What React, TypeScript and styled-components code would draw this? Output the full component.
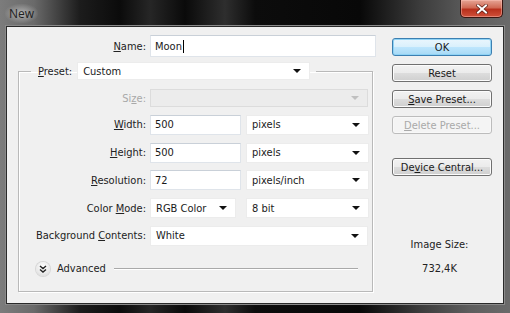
import styled, { createGlobalStyle } from "styled-components";

const GlobalStyle = createGlobalStyle`
  html, body {
    margin: 0;
    padding: 0;
    background: #000;
  }
  body {
    width: 510px;
    height: 313px;
    overflow: hidden;
  }
`;

const uiFont = `"DejaVu Sans Condensed", "DejaVu Sans", sans-serif`;

const Window = styled.div`
  width: 510px;
  height: 313px;
  box-sizing: border-box;
  display: flex;
  flex-direction: column;
  padding: 0 7px 10px;
  background: linear-gradient(
    90deg,
    #7c7c7c 0,
    #6a6a6a 34px,
    #1c1c1c 80px,
    #0b0b0b 120px,
    #262626 150px,
    #0a0a0a 185px,
    #2e2e2e 225px,
    #0c0c0c 255px,
    #080808 360px,
    #3c3c3c 420px,
    #5e5e5e 470px,
    #6a6a6a 510px
  );
  font-family: ${uiFont};
  font-size: 11px;
  color: #222;
`;

const TitleBar = styled.div`
  height: 27px;
  display: flex;
  align-items: flex-start;
  justify-content: space-between;
`;

const Title = styled.span`
  margin-top: 4px;
  margin-left: -2px;
  padding: 1px 4px;
  border-radius: 8px;
  background: radial-gradient(ellipse at center, rgba(190, 190, 190, 0.85) 0, rgba(150, 150, 150, 0) 75%);
  font-family: "Open Sans", "Noto Sans", sans-serif;
  font-size: 12px;
  color: #1e1e1e;
`;

const CloseButton = styled.div`
  width: 43px;
  height: 18px;
  box-sizing: border-box;
  display: flex;
  align-items: center;
  justify-content: center;
  border: 1px solid #3a1510;
  border-top: none;
  border-radius: 0 0 5px 5px;
  background: linear-gradient(180deg, #e6a595 0, #d06a55 45%, #b8301c 55%, #d0503a 100%);
  box-shadow: inset 0 0 0 1px rgba(255, 200, 190, 0.45);
`;

const Body = styled.div`
  flex: 1;
  display: flex;
  background: #f0f0f0;
  box-shadow: 0 0 0 1px #2a2a2a, 0 0 0 2px #8a8a8a;
  padding: 8px 0 0 11px;
`;

const LeftCol = styled.div`
  width: 358px;
  display: flex;
  flex-direction: column;
`;

const RightCol = styled.div`
  width: 100px;
  margin-left: 16px;
  display: flex;
  flex-direction: column;
  padding-top: 3px;
`;

const Row = styled.div<{ $label: number; $h?: number }>`
  display: grid;
  grid-template-columns: ${(p) => p.$label}px auto;
  column-gap: 4px;
  align-items: center;
  height: ${(p) => p.$h ?? 20}px;
`;

const Label = styled.label<{ $disabled?: boolean }>`
  text-align: right;
  white-space: nowrap;
  color: ${(p) => (p.$disabled ? "#a8a8a8" : "#222")};
`;

const Fields = styled.div`
  display: flex;
  gap: 5px;
  height: 100%;
`;

const TextInput = styled.div<{ $w: number; $h?: number }>`
  width: ${(p) => p.$w}px;
  height: ${(p) => p.$h ?? 20}px;
  box-sizing: border-box;
  background: #fff;
  border: 1px solid #dfe4ea;
  border-top-color: #c9d0d8;
  display: flex;
  align-items: center;
  padding-left: 4px;
  color: #1a1a1a;
`;

const Caret = styled.span`
  display: inline-block;
  width: 1px;
  height: 13px;
  background: #000;
  margin-left: 1px;
`;

const Select = styled.div<{ $w: number; $disabled?: boolean; $h?: number }>`
  width: ${(p) => p.$w}px;
  height: ${(p) => p.$h ?? 20}px;
  box-sizing: border-box;
  background: ${(p) => (p.$disabled ? "#ececec" : "#fff")};
  border: 1px solid ${(p) => (p.$disabled ? "#dcdcdc" : "#ececec")};
  display: flex;
  align-items: center;
  justify-content: space-between;
  padding: 0 8px 0 5px;
  color: #1a1a1a;
`;

const Arrow = styled.span<{ $disabled?: boolean }>`
  width: 0;
  height: 0;
  border-left: 4px solid transparent;
  border-right: 4px solid transparent;
  border-top: 4px solid ${(p) => (p.$disabled ? "#c0c0c0" : "#111")};
`;

const Group = styled.fieldset`
  margin: 5px 0 0;
  padding: 0;
  width: 355px;
  box-sizing: border-box;
  border: 1px solid #b9b9b9;
  box-shadow: inset 1px 1px 0 #fff, 1px 1px 0 #fff;
  display: flex;
  flex-direction: column;
`;

const Legend = styled.legend`
  margin-left: 12px;
  padding: 0 6px 0 7px;
  display: flex;
  align-items: center;
  gap: 5px;
  height: 18px;
`;

const GroupRows = styled.div`
  display: flex;
  flex-direction: column;
  gap: 7.75px;
  padding-top: 9px;
`;

const AdvancedRow = styled.div`
  display: flex;
  align-items: center;
  height: 16px;
  margin-top: 15px;
  margin-bottom: 14px;
  padding: 0 14px 0 17px;
  gap: 7px;
`;

const Chevron = styled.span`
  width: 14px;
  height: 14px;
  border-radius: 50%;
  background: radial-gradient(circle at 50% 35%, #ffffff 0, #e9e9e9 60%, #cfcfcf 100%);
  box-shadow: 0 0 0 1px #d6d6d6;
  display: flex;
  align-items: center;
  justify-content: center;
`;

const AdvancedText = styled.span`
  color: #222;
`;

const Rule = styled.span`
  flex: 1;
  height: 1px;
  margin-left: 1px;
  background: #a9a9a9;
  box-shadow: 0 1px 0 #fff;
`;

const Button = styled.div<{ $default?: boolean; $disabled?: boolean; $gap?: number }>`
  height: 18px;
  box-sizing: border-box;
  margin-top: ${(p) => p.$gap ?? 0}px;
  display: flex;
  align-items: center;
  justify-content: center;
  border-radius: 3px;
  color: ${(p) => (p.$disabled ? "#a9a9a9" : "#1a1a1a")};
  border: 1px solid ${(p) => (p.$default ? "#3c7fb1" : p.$disabled ? "#bcbcbc" : "#707070")};
  background: ${(p) =>
    p.$disabled
      ? "#f4f4f4"
      : p.$default
      ? "linear-gradient(180deg, #eaf6fd 0, #d9f0fc 50%, #bee6fd 50%, #a7d9f5 100%)"
      : "linear-gradient(180deg, #f2f2f2 0, #ebebeb 50%, #dddddd 50%, #cfcfcf 100%)"};
  box-shadow: inset 0 0 0 1px
    ${(p) => (p.$default ? "#8fd3f5" : p.$disabled ? "#f8f8f8" : "#fcfcfc")};
`;

const SizeInfo = styled.div`
  margin-top: 62px;
  display: flex;
  flex-direction: column;
  align-items: center;
  gap: 11px;
  color: #222;
  padding-right: 5px;
`;

const App = () => {
  return (
    <>
      <GlobalStyle />
      <Window>
        <TitleBar>
          <Title>New</Title>
          <CloseButton>
            <svg width="12" height="10" viewBox="0 0 12 10">
              <path
                d="M2 1.5 L10 8.5 M10 1.5 L2 8.5"
                stroke="#5a1a10"
                strokeWidth="3.4"
                strokeLinecap="square"
              />
              <path
                d="M2 1.5 L10 8.5 M10 1.5 L2 8.5"
                stroke="#fff"
                strokeWidth="2"
                strokeLinecap="square"
              />
            </svg>
          </CloseButton>
        </TitleBar>
        <Body>
          <LeftCol>
            <Row $label={128} $h={22}>
              <Label>
                <u>N</u>ame:
              </Label>
              <TextInput $w={226} $h={22}>
                Moon
                <Caret />
              </TextInput>
            </Row>
            <Group>
              <Legend>
                <Label>
                  <u>P</u>reset:
                </Label>
                <Select $w={233} $h={18}>
                  Custom
                  <Arrow />
                </Select>
              </Legend>
              <GroupRows>
                <Row $label={127} $h={18}>
                  <Label $disabled>
                    Si<u>z</u>e:
                  </Label>
                  <Select $w={218} $h={18} $disabled>
                    <span />
                    <Arrow $disabled />
                  </Select>
                </Row>
                <Row $label={127}>
                  <Label>
                    <u>W</u>idth:
                  </Label>
                  <Fields>
                    <TextInput $w={91}>500</TextInput>
                    <Select $w={123}>
                      pixels
                      <Arrow />
                    </Select>
                  </Fields>
                </Row>
                <Row $label={127}>
                  <Label>
                    <u>H</u>eight:
                  </Label>
                  <Fields>
                    <TextInput $w={91}>500</TextInput>
                    <Select $w={123}>
                      pixels
                      <Arrow />
                    </Select>
                  </Fields>
                </Row>
                <Row $label={127}>
                  <Label>
                    <u>R</u>esolution:
                  </Label>
                  <Fields>
                    <TextInput $w={91}>72</TextInput>
                    <Select $w={123}>
                      pixels/inch
                      <Arrow />
                    </Select>
                  </Fields>
                </Row>
                <Row $label={127}>
                  <Label>
                    Color <u>M</u>ode:
                  </Label>
                  <Fields>
                    <Select $w={86}>
                      RGB Color
                      <Arrow />
                    </Select>
                    <Select $w={123} style={{ marginLeft: 5 }}>
                      8 bit
                      <Arrow />
                    </Select>
                  </Fields>
                </Row>
                <Row $label={127}>
                  <Label>
                    Background <u>C</u>ontents:
                  </Label>
                  <Select $w={218}>
                    White
                    <Arrow />
                  </Select>
                </Row>
              </GroupRows>
              <AdvancedRow>
                <Chevron>
                  <svg width="8" height="8" viewBox="0 0 8 8">
                    <path
                      d="M1 1 L4 3.5 L7 1 M1 4.5 L4 7 L7 4.5"
                      fill="none"
                      stroke="#222"
                      strokeWidth="1.4"
                    />
                  </svg>
                </Chevron>
                <AdvancedText>Advanced</AdvancedText>
                <Rule />
              </AdvancedRow>
            </Group>
          </LeftCol>
          <RightCol>
            <Button $default>OK</Button>
            <Button $gap={8}>Reset</Button>
            <Button $gap={8}>
              <u>S</u>ave Preset...
            </Button>
            <Button $gap={8} $disabled>
              <u>D</u>elete Preset...
            </Button>
            <Button $gap={24}>
              De<u>v</u>ice Central...
            </Button>
            <SizeInfo>
              <span>Image Size:</span>
              <span>732,4K</span>
            </SizeInfo>
          </RightCol>
        </Body>
      </Window>
    </>
  );
};

export default App;
